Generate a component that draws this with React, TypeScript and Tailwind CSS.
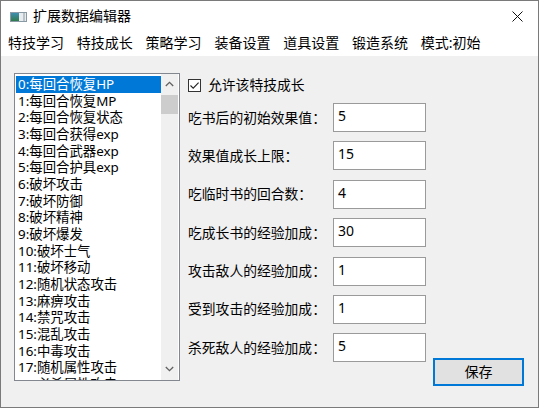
import React from "react";

// list entries of the skill listbox
const skills = [
  "0:每回合恢复HP",
  "1:每回合恢复MP",
  "2:每回合恢复状态",
  "3:每回合获得exp",
  "4:每回合武器exp",
  "5:每回合护具exp",
  "6:破坏攻击",
  "7:破坏防御",
  "8:破坏精神",
  "9:破坏爆发",
  "10:破坏士气",
  "11:破坏移动",
  "12:随机状态攻击",
  "13:麻痹攻击",
  "14:禁咒攻击",
  "15:混乱攻击",
  "16:中毒攻击",
  "17:随机属性攻击",
  "18:必杀属性攻击",
];

const menus = ["特技学习", "特技成长", "策略学习", "装备设置", "道具设置", "锻造系统", "模式:初始"];

const fields = [
  { label: "吃书后的初始效果值：", value: "5" },
  { label: "效果值成长上限：", value: "15" },
  { label: "吃临时书的回合数：", value: "4" },
  { label: "吃成长书的经验加成：", value: "30" },
  { label: "攻击敌人的经验加成：", value: "1" },
  { label: "受到攻击的经验加成：", value: "1" },
  { label: "杀死敌人的经验加成：", value: "5" },
];

const AppIcon = () => (
  <svg width="17" height="10" viewBox="0 0 17 10">
    <defs>
      <linearGradient id="ic" x1="0" y1="0" x2="0" y2="1">
        <stop offset="0" stopColor="#3d8fb0" />
        <stop offset="1" stopColor="#2f7a4c" />
      </linearGradient>
    </defs>
    <rect x="0.5" y="0.5" width="16" height="9" fill="#e8ecef" stroke="#8a9aa5" />
    <rect x="1" y="1" width="8" height="8" fill="url(#ic)" />
    <rect x="13" y="1" width="2" height="8" fill="#b9c3ca" />
  </svg>
);

const ListBox = () => (
  <div className="w-[166px] h-[308px] border border-[#828790] bg-white flex overflow-hidden text-[13.4px]">
    <div className="w-[146px] pl-[1px] pt-[2px] overflow-hidden">
      {skills.map((s, i) => (
        <div
          key={s}
          className={
            i === 0
              ? "h-[16.67px] leading-[16.67px] pl-[2px] bg-[#0078d7] text-white whitespace-nowrap"
              : "h-[16.67px] leading-[16.67px] pl-[2px] text-black whitespace-nowrap"
          }
        >
          {s}
        </div>
      ))}
    </div>
    <div className="w-[17px] bg-[#f0f0f0] flex flex-col items-center">
      <div className="h-[19px] w-full flex items-center justify-center">
        <svg width="9" height="6" viewBox="0 0 9 6">
          <path d="M0.8 5 L4.5 1.3 L8.2 5" fill="none" stroke="#606060" strokeWidth="1.3" />
        </svg>
      </div>
      <div className="mt-[2px] h-[19px] w-full bg-[#cdcdcd]" />
      <div className="flex-1" />
      <div className="h-[19px] w-full flex items-center justify-center mb-[2px]">
        <svg width="9" height="6" viewBox="0 0 9 6">
          <path d="M0.8 1 L4.5 4.7 L8.2 1" fill="none" stroke="#606060" strokeWidth="1.3" />
        </svg>
      </div>
    </div>
  </div>
);

export default function App() {
  return (
    <div className="w-[539px] h-[408px] border border-[#7a7a7a] bg-[#f0f0f0] flex flex-col text-black font-['Noto_Sans','Noto_Sans_CJK_SC',sans-serif]">
      {/* title bar */}
      <div className="h-[30px] bg-white flex items-center">
        <div className="ml-[9px] mt-[1px] flex items-center">
          <AppIcon />
        </div>
        <div className="ml-[6px] text-[14px] leading-[18px]">扩展数据编辑器</div>
        <div className="flex-1" />
        <div className="w-[46px] h-[30px] flex items-center justify-center mr-[-2px]">
          <svg width="11" height="11" viewBox="0 0 11 11">
            <path d="M0.5 0.5 L10.5 10.5 M10.5 0.5 L0.5 10.5" stroke="#111" strokeWidth="1" />
          </svg>
        </div>
      </div>

      {/* menu bar */}
      <div className="h-[25px] bg-white flex items-center pl-[7px] gap-[12.8px] text-[14px] leading-[18px] pb-[1px]">
        {menus.map((m) => (
          <span key={m}>{m}</span>
        ))}
      </div>

      {/* client area */}
      <div className="flex-1 flex items-start text-[13.8px]">
        <div className="ml-[13px] mt-[17px]">
          <ListBox />
        </div>

        <div className="ml-[8px] mt-[21px] flex flex-col">
          <label className="h-[16px] flex items-center">
            <span className="w-[13px] h-[13px] border border-[#333] bg-white flex items-center justify-center">
              <svg width="11" height="11" viewBox="0 0 11 11">
                <path d="M1.5 5.5 L4.2 8.2 L9.6 2.6" fill="none" stroke="#222" strokeWidth="1.1" />
              </svg>
            </span>
            <span className="ml-[7px] leading-[16px]">允许该特技成长</span>
          </label>

          <div className="mt-[10px] flex flex-col gap-[9.4px]">
            {fields.map((f) => (
              <div key={f.label} className="flex items-center h-[29px]">
                <span className="w-[145px] whitespace-nowrap leading-[18px]">{f.label}</span>
                <div className="w-[93px] h-[29px] border border-[#9a9a9a] bg-white pl-[4px] pt-[3px] leading-[18px] text-[14px]">
                  {f.value}
                </div>
              </div>
            ))}
          </div>
        </div>

        <button className="self-end ml-[7px] mb-[21px] w-[91px] h-[28px] border-2 border-[#0078d7] bg-[#e1e1e1] text-[14px] leading-[18px] flex items-center justify-center">
          保存
        </button>
      </div>
    </div>
  );
}
